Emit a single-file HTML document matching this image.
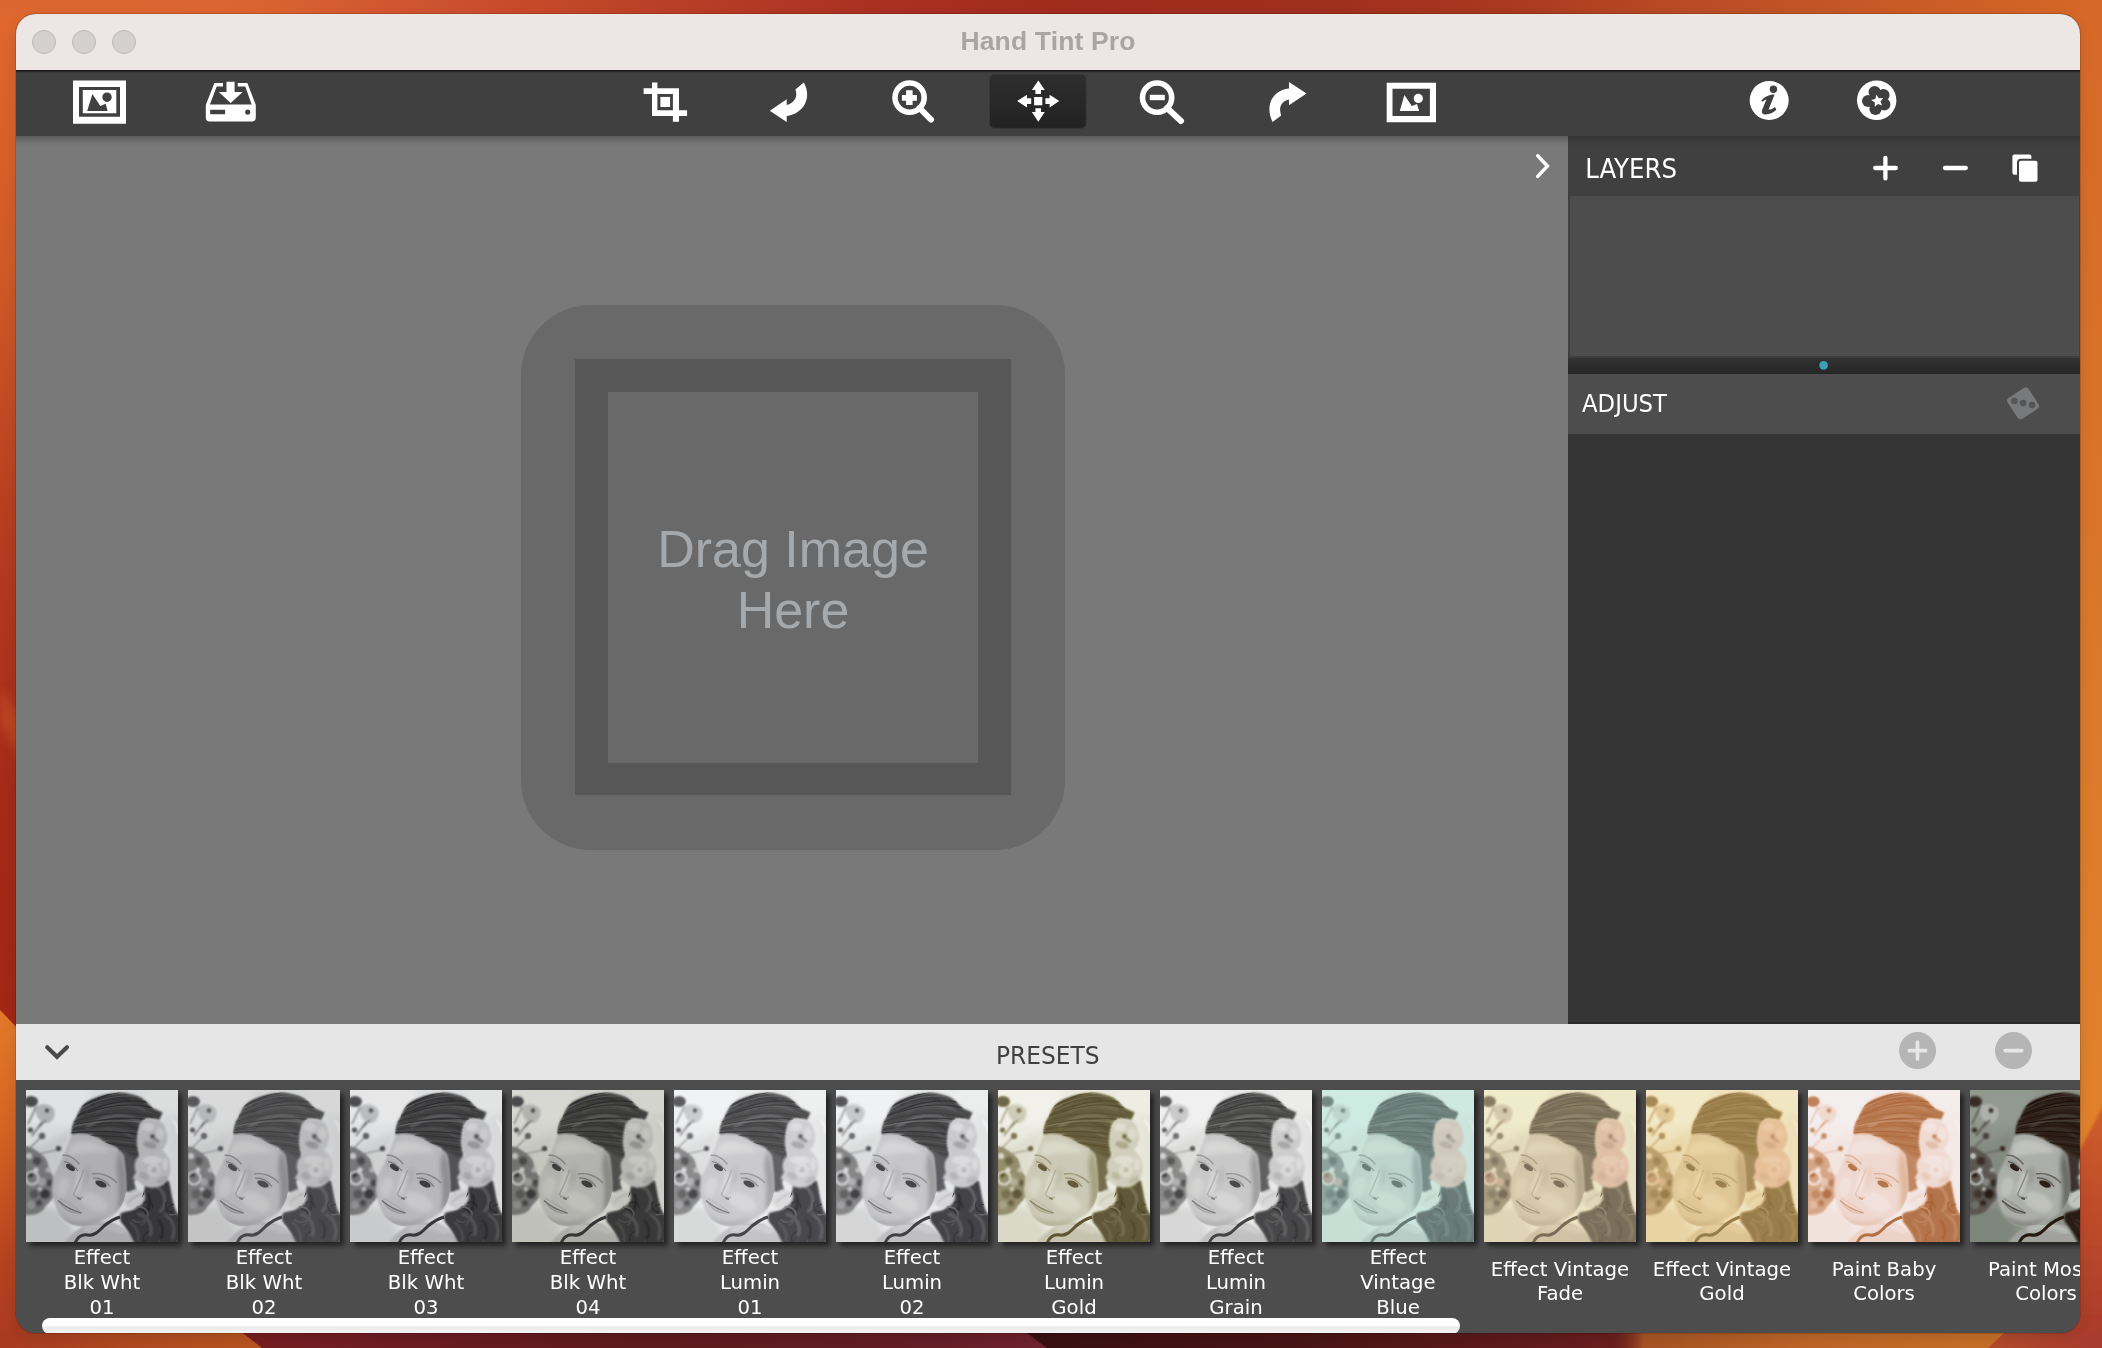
<!DOCTYPE html>
<html lang="en">
<head>
<meta charset="utf-8">
<title>Hand Tint Pro</title>
<style>
*{box-sizing:border-box;margin:0;padding:0}
html,body{width:2102px;height:1348px;overflow:hidden;background:#c4502a}
body{position:relative;font-family:"DejaVu Sans","Liberation Sans",sans-serif}
#wall{position:absolute;left:0;top:0;width:2102px;height:1348px}
#win{position:absolute;left:16px;top:14px;width:2064px;height:1319px;border-radius:20px;overflow:hidden;
 box-shadow:0 0 0 1px rgba(0,0,0,.14),0 6px 14px rgba(0,0,0,.10);background:#4d4d4d}
/* inner layer uses page coordinates */
#in{position:absolute;left:-16px;top:-14px;width:2102px;height:1348px;will-change:transform}
#in>*{position:absolute}
#titlebar{left:16px;top:14px;width:2064px;height:56px;background:#ece7e4}
.tl{position:absolute;top:16px;width:24px;height:24px;border-radius:50%;background:#d4d0ce;border:1px solid #bdb9b7}
#title{left:16px;top:14px;width:2064px;height:56px;line-height:55px;text-align:center;
 font:bold 26.5px/55px "Liberation Sans",sans-serif;color:#aaa5a3;letter-spacing:.15px}
#toolbar{left:16px;top:70px;width:2064px;height:66px;background:linear-gradient(#181818 0,#1c1c1c 1px,#383838 2.2px,#404040 3.5px)}
#canvas{left:16px;top:136px;width:1552px;height:888px;background:linear-gradient(#5c5c5c 0,#747474 7px,#797979 13px)}
#drop1{left:521px;top:304.5px;width:544px;height:545px;border-radius:70px;background:#696969}
#drop2{left:575px;top:359px;width:436px;height:436px;background:#575757}
#drop3{left:608px;top:392px;width:370px;height:371px;background:#696969}
#droptxt{left:608px;top:392px;width:370px;text-align:center;font:52px/61px "Liberation Sans",sans-serif;color:#a6a9ac;padding-top:127px}
#panel{left:1568px;top:136px;width:512px;height:888px;background:#353535}
#lhead{left:1568px;top:136px;width:512px;height:60px;background:linear-gradient(#343434 0,#3d3d3d 6px,#404040 12px)}
#lbg{left:1568px;top:196px;width:512px;height:162px;background:#3f3f3f}
#llist{left:1570px;top:196px;width:508.5px;height:160px;background:#4d4d4d}
#ldiv{left:1568px;top:358px;width:512px;height:16px;background:linear-gradient(#323232,#262626)}
#ahead{left:1568px;top:374px;width:512px;height:60px;background:#4d4d4d}
#phead{left:16px;top:1024px;width:2064px;height:55.5px;background:#e6e6e6}
#pbody{left:16px;top:1079.5px;width:2064px;height:253.5px;background:#4d4d4d}
#pline{left:1568px;top:1022.4px;width:512px;height:1.6px;background:#2a2a2a}
.th{position:absolute;top:10.5px;width:152px;height:152px;box-shadow:4px 4px 5px rgba(0,0,0,.55);background:#ccc}
.th svg{display:block}
.lbl{position:absolute;width:172px;text-align:center;color:#fff;font:19.7px/25px "DejaVu Sans",sans-serif;white-space:nowrap}
.l3{top:165.6px}
.l2{top:178px;line-height:24px}
#scroll{left:42px;top:1318px;width:1418px;height:16px;border-radius:8px;background:linear-gradient(#fff 0,#fff 46%,#ebebeb 56%,#f4f4f4 100%)}
#ovl{left:0;top:0;width:2102px;height:1348px;pointer-events:none}
</style>
</head>
<body>
<svg id="wall" viewBox="0 0 2102 1348" preserveAspectRatio="none">
 <defs>
  <linearGradient id="wtop" x1="0" x2="1" y1="0" y2="0">
   <stop offset="0" stop-color="#dd6630"/><stop offset=".12" stop-color="#dc6430"/><stop offset=".19" stop-color="#d05530"/>
   <stop offset=".25" stop-color="#c64a2a"/><stop offset=".333" stop-color="#b83c26"/><stop offset=".416" stop-color="#aa3022"/>
   <stop offset=".5" stop-color="#a02c1e"/><stop offset=".62" stop-color="#9e2e1e"/><stop offset=".714" stop-color="#a8381f"/>
   <stop offset=".785" stop-color="#b64824"/><stop offset=".856" stop-color="#c05426"/><stop offset=".928" stop-color="#cc5e26"/><stop offset="1" stop-color="#d66828"/>
  </linearGradient>
  <linearGradient id="wleft" x1="0" x2="0" y1="0" y2="1">
   <stop offset="0" stop-color="#e0672f"/><stop offset=".25" stop-color="#d05a27"/><stop offset=".5" stop-color="#b53d20"/>
   <stop offset=".75" stop-color="#a52a18"/><stop offset="1" stop-color="#a02616"/>
  </linearGradient>
  <linearGradient id="wleft2" x1="0" x2="0" y1="0" y2="1">
   <stop offset="0" stop-color="#e27a28"/><stop offset=".35" stop-color="#d46424"/><stop offset=".75" stop-color="#b44220"/><stop offset="1" stop-color="#a83a20"/>
  </linearGradient>
  <linearGradient id="wright" x1="0" x2="0" y1="0" y2="1">
   <stop offset="0" stop-color="#d66828"/><stop offset=".3" stop-color="#d8722a"/><stop offset=".75" stop-color="#e0802c"/><stop offset="1" stop-color="#e2842c"/>
  </linearGradient>
  <linearGradient id="wright2" x1="0" x2="0" y1="0" y2="1">
   <stop offset="0" stop-color="#d0602c"/><stop offset=".4" stop-color="#c04e2c"/><stop offset="1" stop-color="#a6382c"/>
  </linearGradient>
  <linearGradient id="wb1" x1="0" x2="1" y1="0" y2="0">
   <stop offset="0" stop-color="#a83a20"/><stop offset=".5" stop-color="#b04a20"/><stop offset="1" stop-color="#b85420"/>
  </linearGradient>
  <linearGradient id="wb2" x1="0" x2="1" y1="0" y2="0">
   <stop offset="0" stop-color="#781e22"/><stop offset=".5" stop-color="#5c1a1e"/><stop offset=".85" stop-color="#641e26"/><stop offset="1" stop-color="#70222e"/>
  </linearGradient>
  <linearGradient id="wb3" x1="0" x2="1" y1="0" y2="0">
   <stop offset="0" stop-color="#381012"/><stop offset=".4" stop-color="#481416"/><stop offset=".8" stop-color="#641c1c"/><stop offset="1" stop-color="#74241e"/>
  </linearGradient>
  <linearGradient id="wb4" x1="0" x2="1" y1="0" y2="0">
   <stop offset="0" stop-color="#74241e" stop-opacity="0"/><stop offset=".08" stop-color="#a85424"/><stop offset=".5" stop-color="#be6627"/><stop offset="1" stop-color="#c87028"/>
  </linearGradient>
  <linearGradient id="wb5" x1="0" x2="1" y1="0" y2="0">
   <stop offset="0" stop-color="#b44c2c"/><stop offset="1" stop-color="#a83a2e"/>
  </linearGradient>
  <filter id="wbl"><feGaussianBlur stdDeviation="5"/></filter>
  <filter id="wbl2" x="-20%" y="-20%" width="140%" height="140%"><feGaussianBlur stdDeviation="1.6"/></filter>
 </defs>
 <rect width="2102" height="1348" fill="#b8452a"/>
 <!-- left strip -->
 <rect x="0" y="0" width="40" height="1060" fill="url(#wleft)"/>
 <polygon points="0,688 40,742 40,790 0,724" fill="#c24c27" opacity=".7" filter="url(#wbl)"/>
 <polygon points="0,1010 40,1052 40,1348 0,1348" fill="url(#wleft2)"/>
 <!-- right strip -->
 <rect x="2070" y="0" width="32" height="1348" fill="url(#wright)"/>
 <polygon points="2050,1207 2112,1089 2112,1360 2050,1360" fill="url(#wright2)" filter="url(#wbl2)"/>
 <!-- top strip -->
 <rect x="0" y="0" width="2102" height="15" fill="url(#wtop)"/>
 <!-- bottom strip -->
 <rect x="0" y="1331" width="262" height="17" fill="url(#wb1)"/>
 <polygon points="240,1331 1047,1331 1047,1348 262,1348" fill="url(#wb2)"/>
 <polygon points="1024,1331 1700,1331 1700,1348 1047,1348" fill="url(#wb3)"/>
 <rect x="1612" y="1331" width="400" height="17" fill="url(#wb4)"/>
 <polygon points="2006,1331 2102,1331 2102,1348 1988,1348" fill="url(#wb5)"/>
</svg>

<div id="win"><div id="in">
 <div id="titlebar">
  <div class="tl" style="left:16px"></div><div class="tl" style="left:56px"></div><div class="tl" style="left:96px"></div>
 </div>
 <div id="title">Hand Tint Pro</div>
 <div id="toolbar"></div>
 <div id="canvas"></div>
 <div id="drop1"></div><div id="drop2"></div><div id="drop3"></div>
 <div id="droptxt">Drag Image<br>Here</div>
 <div id="panel"></div>
 <div id="lhead"></div><div id="lbg"></div><div id="llist"></div><div id="ldiv"></div><div id="ahead"></div>
 <div id="phead"></div>
 <div id="pline"></div>
 <div id="pbody">
<div class="th" style="left:10px"><svg width="152" height="152" viewBox="0 0 152 152"><g><use href="#portrait-bg"/><use href="#portrait-fg"/></g></svg></div><div class="lbl l3" style="left:0px">Effect<br>Blk Wht<br>01</div>
<div class="th" style="left:172px"><svg width="152" height="152" viewBox="0 0 152 152"><g filter="url(#f-bw2)"><use href="#portrait-bg"/><use href="#portrait-fg"/></g></svg></div><div class="lbl l3" style="left:162px">Effect<br>Blk Wht<br>02</div>
<div class="th" style="left:334px"><svg width="152" height="152" viewBox="0 0 152 152"><g filter="url(#f-bw3)"><use href="#portrait-bg"/><use href="#portrait-fg"/></g></svg></div><div class="lbl l3" style="left:324px">Effect<br>Blk Wht<br>03</div>
<div class="th" style="left:496px"><svg width="152" height="152" viewBox="0 0 152 152"><g filter="url(#f-bw4)"><use href="#portrait-bg"/><use href="#portrait-fg"/></g></svg></div><div class="lbl l3" style="left:486px">Effect<br>Blk Wht<br>04</div>
<div class="th" style="left:658px"><svg width="152" height="152" viewBox="0 0 152 152"><g filter="url(#f-lu1)"><use href="#portrait-bg"/><use href="#portrait-fg"/></g></svg></div><div class="lbl l3" style="left:648px">Effect<br>Lumin<br>01</div>
<div class="th" style="left:820px"><svg width="152" height="152" viewBox="0 0 152 152"><g filter="url(#f-lu2)"><use href="#portrait-bg"/><use href="#portrait-fg"/></g></svg></div><div class="lbl l3" style="left:810px">Effect<br>Lumin<br>02</div>
<div class="th" style="left:982px"><svg width="152" height="152" viewBox="0 0 152 152"><g filter="url(#f-lug)"><use href="#portrait-bg"/><use href="#portrait-fg"/></g></svg></div><div class="lbl l3" style="left:972px">Effect<br>Lumin<br>Gold</div>
<div class="th" style="left:1144px"><svg width="152" height="152" viewBox="0 0 152 152"><g filter="url(#f-lur)"><use href="#portrait-bg"/><use href="#portrait-fg"/></g></svg></div><div class="lbl l3" style="left:1134px">Effect<br>Lumin<br>Grain</div>
<div class="th" style="left:1306px"><svg width="152" height="152" viewBox="0 0 152 152"><g filter="url(#f-vbl)"><use href="#portrait-bg"/><use href="#portrait-fg"/></g><use href="#flower-tint" fill="#f0a896" opacity=".3"/></svg></div><div class="lbl l3" style="left:1296px">Effect<br>Vintage<br>Blue</div>
<div class="th" style="left:1468px"><svg width="152" height="152" viewBox="0 0 152 152"><g filter="url(#f-vfa)"><use href="#portrait-bg"/><use href="#portrait-fg"/></g><use href="#flower-tint" fill="#f0a896" opacity=".3"/></svg></div><div class="lbl l2" style="left:1458px">Effect Vintage<br>Fade</div>
<div class="th" style="left:1630px"><svg width="152" height="152" viewBox="0 0 152 152"><g filter="url(#f-vgo)"><use href="#portrait-bg"/><use href="#portrait-fg"/></g><use href="#flower-tint" fill="#f0a896" opacity=".3"/></svg></div><div class="lbl l2" style="left:1620px">Effect Vintage<br>Gold</div>
<div class="th" style="left:1792px"><svg width="152" height="152" viewBox="0 0 152 152"><g filter="url(#f-pba)"><use href="#portrait-bg"/><use href="#portrait-fg"/></g></svg></div><div class="lbl l2" style="left:1782px">Paint Baby<br>Colors</div>
<div class="th" style="left:1954px"><svg width="152" height="152" viewBox="0 0 152 152"><g filter="url(#f-pmobg)"><use href="#portrait-bg"/></g><g filter="url(#f-pmo)"><use href="#portrait-fg"/></g></svg></div><div class="lbl l2" style="left:1944px">Paint Mossy<br>Colors</div>
 </div>
 <div id="scroll"></div>

 <svg id="ovl" viewBox="0 0 2102 1348">
  <defs>
   <linearGradient id="mvbg" x1="0" x2="0" y1="0" y2="1"><stop offset="0" stop-color="#2e2e2e"/><stop offset="1" stop-color="#222"/></linearGradient>
<filter id="f-bw2" x="0" y="0" width="100%" height="100%" color-interpolation-filters="sRGB"><feComponentTransfer><feFuncR type="table" tableValues="0.112 0.145 0.177 0.209 0.242 0.274 0.306 0.339 0.371 0.403 0.436 0.468 0.500 0.533 0.568 0.615 0.661 0.707 0.753 0.778 0.804 0.829 0.854 0.880 0.905 0.930"/><feFuncG type="table" tableValues="0.112 0.145 0.177 0.209 0.242 0.274 0.306 0.339 0.371 0.403 0.436 0.468 0.500 0.533 0.568 0.615 0.661 0.707 0.753 0.778 0.804 0.829 0.854 0.880 0.905 0.930"/><feFuncB type="table" tableValues="0.112 0.145 0.177 0.209 0.242 0.274 0.306 0.339 0.371 0.403 0.436 0.468 0.500 0.533 0.568 0.615 0.661 0.707 0.753 0.778 0.804 0.829 0.854 0.880 0.905 0.930"/></feComponentTransfer></filter>
<filter id="f-bw3" x="0" y="0" width="100%" height="100%" color-interpolation-filters="sRGB"><feComponentTransfer><feFuncR type="table" tableValues="0.016 0.056 0.096 0.135 0.175 0.215 0.255 0.295 0.335 0.375 0.415 0.455 0.495 0.535 0.577 0.625 0.673 0.721 0.769 0.802 0.836 0.870 0.904 0.938 0.971 1.000"/><feFuncG type="table" tableValues="0.016 0.056 0.096 0.135 0.175 0.215 0.255 0.295 0.335 0.375 0.415 0.455 0.495 0.535 0.577 0.625 0.673 0.721 0.769 0.802 0.836 0.870 0.904 0.938 0.971 1.000"/><feFuncB type="table" tableValues="0.016 0.056 0.096 0.135 0.175 0.215 0.255 0.295 0.335 0.375 0.415 0.455 0.495 0.535 0.577 0.625 0.673 0.721 0.769 0.802 0.836 0.870 0.904 0.938 0.971 1.000"/></feComponentTransfer></filter>
<filter id="f-bw4" x="0" y="0" width="100%" height="100%" color-interpolation-filters="sRGB"><feComponentTransfer><feFuncR type="table" tableValues="0.018 0.056 0.094 0.132 0.170 0.208 0.246 0.284 0.323 0.361 0.399 0.437 0.475 0.513 0.553 0.599 0.645 0.691 0.737 0.764 0.790 0.817 0.843 0.870 0.897 0.923"/><feFuncG type="table" tableValues="0.018 0.056 0.094 0.132 0.170 0.208 0.246 0.284 0.323 0.361 0.399 0.437 0.475 0.513 0.553 0.599 0.645 0.691 0.737 0.764 0.790 0.817 0.843 0.870 0.897 0.923"/><feFuncB type="table" tableValues="0.016 0.053 0.090 0.127 0.164 0.201 0.238 0.275 0.312 0.349 0.386 0.424 0.461 0.498 0.537 0.581 0.625 0.669 0.714 0.740 0.767 0.793 0.820 0.846 0.873 0.900"/></feComponentTransfer></filter>
<filter id="f-lu1" x="0" y="0" width="100%" height="100%" color-interpolation-filters="sRGB"><feComponentTransfer><feFuncR type="table" tableValues="0.055 0.098 0.140 0.183 0.226 0.269 0.312 0.354 0.397 0.440 0.483 0.525 0.568 0.611 0.654 0.699 0.743 0.787 0.831 0.860 0.889 0.918 0.947 0.976 1.000 1.000"/><feFuncG type="table" tableValues="0.055 0.098 0.140 0.183 0.226 0.269 0.312 0.354 0.397 0.440 0.483 0.525 0.568 0.611 0.654 0.699 0.743 0.787 0.831 0.860 0.889 0.918 0.947 0.976 1.000 1.000"/><feFuncB type="table" tableValues="0.055 0.098 0.140 0.183 0.226 0.269 0.312 0.354 0.397 0.440 0.483 0.525 0.568 0.611 0.654 0.699 0.743 0.787 0.831 0.860 0.889 0.918 0.947 0.976 1.000 1.000"/></feComponentTransfer></filter>
<filter id="f-lu2" x="0" y="0" width="100%" height="100%" color-interpolation-filters="sRGB"><feComponentTransfer><feFuncR type="table" tableValues="0.026 0.070 0.114 0.157 0.201 0.245 0.289 0.332 0.376 0.420 0.463 0.507 0.551 0.595 0.639 0.683 0.727 0.771 0.816 0.847 0.878 0.910 0.941 0.973 1.000 1.000"/><feFuncG type="table" tableValues="0.026 0.070 0.114 0.157 0.201 0.245 0.289 0.332 0.376 0.420 0.463 0.507 0.551 0.595 0.639 0.683 0.727 0.771 0.816 0.847 0.878 0.910 0.941 0.973 1.000 1.000"/><feFuncB type="table" tableValues="0.026 0.070 0.114 0.157 0.201 0.245 0.289 0.332 0.376 0.420 0.463 0.507 0.551 0.595 0.639 0.683 0.727 0.771 0.816 0.847 0.878 0.910 0.941 0.973 1.000 1.000"/></feComponentTransfer></filter>
<filter id="f-lug" x="0" y="0" width="100%" height="100%" color-interpolation-filters="sRGB"><feComponentTransfer><feFuncR type="table" tableValues="0.188 0.222 0.257 0.291 0.325 0.359 0.394 0.428 0.462 0.496 0.530 0.565 0.599 0.633 0.669 0.712 0.754 0.797 0.839 0.866 0.892 0.919 0.945 0.972 0.998 1.000"/><feFuncG type="table" tableValues="0.149 0.185 0.220 0.256 0.292 0.327 0.363 0.399 0.434 0.470 0.506 0.541 0.577 0.612 0.651 0.696 0.741 0.786 0.831 0.859 0.887 0.915 0.942 0.970 0.998 1.000"/><feFuncB type="table" tableValues="0.013 0.049 0.085 0.121 0.158 0.194 0.230 0.266 0.302 0.338 0.374 0.410 0.447 0.483 0.524 0.581 0.639 0.696 0.753 0.792 0.830 0.869 0.907 0.946 0.985 1.000"/></feComponentTransfer></filter>
<filter id="f-lur" x="0" y="0" width="100%" height="100%" color-interpolation-filters="sRGB"><feComponentTransfer><feFuncR type="table" tableValues="0.047 0.090 0.133 0.175 0.218 0.261 0.304 0.347 0.389 0.432 0.475 0.518 0.560 0.603 0.646 0.691 0.735 0.779 0.824 0.852 0.881 0.910 0.939 0.968 0.997 1.000"/><feFuncG type="table" tableValues="0.047 0.090 0.133 0.175 0.218 0.261 0.304 0.347 0.389 0.432 0.475 0.518 0.560 0.603 0.646 0.691 0.735 0.779 0.824 0.852 0.881 0.910 0.939 0.968 0.997 1.000"/><feFuncB type="table" tableValues="0.039 0.082 0.125 0.168 0.210 0.253 0.296 0.339 0.381 0.424 0.467 0.510 0.553 0.595 0.639 0.683 0.727 0.771 0.816 0.845 0.874 0.903 0.932 0.960 0.989 1.000"/></feComponentTransfer></filter>
<filter id="f-vbl" x="0" y="0" width="100%" height="100%" color-interpolation-filters="sRGB"><feComponentTransfer><feFuncR type="table" tableValues="0.285 0.309 0.333 0.356 0.380 0.404 0.428 0.451 0.475 0.499 0.523 0.546 0.570 0.594 0.621 0.660 0.699 0.738 0.776 0.785 0.793 0.802 0.810 0.819 0.827 0.836"/><feFuncG type="table" tableValues="0.340 0.366 0.393 0.420 0.446 0.473 0.500 0.526 0.553 0.579 0.606 0.633 0.659 0.686 0.715 0.752 0.789 0.826 0.863 0.877 0.892 0.906 0.921 0.935 0.950 0.964"/><feFuncB type="table" tableValues="0.322 0.347 0.373 0.399 0.424 0.450 0.476 0.501 0.527 0.553 0.578 0.604 0.630 0.655 0.683 0.718 0.753 0.788 0.824 0.839 0.855 0.871 0.886 0.902 0.918 0.933"/></feComponentTransfer></filter>
<filter id="f-vfa" x="0" y="0" width="100%" height="100%" color-interpolation-filters="sRGB"><feComponentTransfer><feFuncR type="table" tableValues="0.335 0.362 0.390 0.417 0.445 0.472 0.500 0.528 0.555 0.583 0.610 0.638 0.665 0.693 0.722 0.758 0.793 0.828 0.863 0.882 0.901 0.921 0.940 0.959 0.979 0.998"/><feFuncG type="table" tableValues="0.288 0.315 0.343 0.370 0.398 0.425 0.453 0.481 0.508 0.536 0.563 0.591 0.618 0.646 0.675 0.709 0.743 0.778 0.812 0.840 0.867 0.895 0.923 0.951 0.978 1.000"/><feFuncB type="table" tableValues="0.222 0.246 0.270 0.294 0.317 0.341 0.365 0.389 0.412 0.436 0.460 0.484 0.507 0.531 0.557 0.591 0.624 0.657 0.690 0.717 0.743 0.770 0.796 0.823 0.849 0.876"/></feComponentTransfer></filter>
<filter id="f-vgo" x="0" y="0" width="100%" height="100%" color-interpolation-filters="sRGB"><feComponentTransfer><feFuncR type="table" tableValues="0.484 0.506 0.527 0.549 0.571 0.593 0.615 0.637 0.659 0.680 0.702 0.724 0.746 0.768 0.791 0.819 0.847 0.874 0.902 0.914 0.926 0.938 0.950 0.962 0.974 0.986"/><feFuncG type="table" tableValues="0.374 0.396 0.418 0.439 0.461 0.483 0.505 0.527 0.549 0.571 0.593 0.614 0.636 0.658 0.683 0.715 0.747 0.779 0.812 0.837 0.862 0.888 0.913 0.938 0.964 0.989"/><feFuncB type="table" tableValues="0.165 0.188 0.210 0.233 0.256 0.279 0.302 0.324 0.347 0.370 0.393 0.416 0.439 0.461 0.486 0.518 0.549 0.580 0.612 0.653 0.694 0.735 0.776 0.817 0.858 0.899"/></feComponentTransfer></filter>
<filter id="f-pba" x="0" y="0" width="100%" height="100%" color-interpolation-filters="sRGB"><feComponentTransfer><feFuncR type="table" tableValues="0.586 0.607 0.629 0.651 0.673 0.695 0.717 0.739 0.761 0.782 0.804 0.826 0.848 0.870 0.890 0.905 0.919 0.934 0.949 0.951 0.954 0.956 0.959 0.961 0.963 0.966"/><feFuncG type="table" tableValues="0.272 0.305 0.338 0.372 0.405 0.438 0.472 0.505 0.538 0.571 0.605 0.638 0.671 0.704 0.738 0.773 0.808 0.843 0.878 0.893 0.907 0.922 0.936 0.951 0.965 0.980"/><feFuncB type="table" tableValues="0.058 0.098 0.139 0.180 0.221 0.262 0.303 0.344 0.385 0.425 0.466 0.507 0.548 0.589 0.633 0.687 0.740 0.794 0.847 0.869 0.890 0.912 0.934 0.956 0.977 0.999"/></feComponentTransfer></filter>
<filter id="f-pmo" x="0" y="0" width="100%" height="100%" color-interpolation-filters="sRGB"><feComponentTransfer><feFuncR type="table" tableValues="0.000 0.019 0.052 0.084 0.116 0.149 0.181 0.213 0.246 0.278 0.310 0.342 0.375 0.407 0.449 0.521 0.593 0.665 0.737 0.764 0.790 0.817 0.843 0.870 0.897 0.923"/><feFuncG type="table" tableValues="0.000 0.000 0.000 0.012 0.051 0.090 0.129 0.168 0.207 0.246 0.285 0.324 0.363 0.402 0.450 0.524 0.597 0.671 0.745 0.772 0.798 0.825 0.851 0.878 0.904 0.931"/><feFuncB type="table" tableValues="0.000 0.000 0.000 0.000 0.020 0.059 0.098 0.137 0.176 0.215 0.254 0.293 0.332 0.371 0.418 0.492 0.566 0.640 0.714 0.740 0.767 0.793 0.820 0.846 0.873 0.900"/></feComponentTransfer></filter>
<filter id="f-pmobg" x="0" y="0" width="100%" height="100%" color-interpolation-filters="sRGB"><feComponentTransfer><feFuncR type="table" tableValues="0.000 0.023 0.046 0.068 0.091 0.114 0.137 0.160 0.183 0.205 0.228 0.251 0.274 0.297 0.324 0.364 0.405 0.446 0.486 0.508 0.530 0.551 0.573 0.595 0.617 0.638"/><feFuncG type="table" tableValues="0.000 0.014 0.039 0.064 0.088 0.113 0.138 0.163 0.187 0.212 0.237 0.261 0.286 0.311 0.340 0.382 0.425 0.467 0.510 0.532 0.553 0.575 0.597 0.618 0.640 0.662"/><feFuncB type="table" tableValues="0.000 0.007 0.030 0.053 0.076 0.098 0.121 0.144 0.167 0.190 0.212 0.235 0.258 0.281 0.308 0.349 0.389 0.430 0.471 0.492 0.514 0.536 0.557 0.579 0.601 0.623"/></feComponentTransfer></filter>
   <filter id="pb1" x="-5%" y="-5%" width="110%" height="110%"><feGaussianBlur stdDeviation="0.8"/></filter>
   <filter id="pb2" x="-10%" y="-10%" width="120%" height="120%"><feGaussianBlur stdDeviation="3"/></filter>
   <filter id="pb3" x="-5%" y="-5%" width="110%" height="110%"><feGaussianBlur stdDeviation="0.65"/></filter>
   <filter id="pb4" x="-5%" y="-5%" width="110%" height="110%"><feGaussianBlur stdDeviation="2"/></filter>
   <clipPath id="hclip"><path d="M45.5 45C45.5 36 48 30 50.6 27.5C53 20 56 16 59.3 13C66 7.5 80 3.5 90.4 2.9C98 2 108 4 115.7 8C121 11.5 124 15.5 126.5 18L136.7 22.4L133 30.4C128 29 123 28 119.3 29C114 33 112 40 113 48C112 56 114 62 113.5 70L104.8 65.6C100 62.6 97 60.6 94 59.8C88 56.5 84 54.5 79.5 52.5C76 50.5 72 47.5 68.7 46.8C64 44.5 60 43.9 57.8 43.9C53 43.4 49 43.8 45.5 45Z"/></clipPath>
   <clipPath id="cclip"><path d="M120 92C126 88 136 87 143 91C145 100 146 108 147.5 113C149 120 151 124 157 130L157 157L108 157C107 148 101 140 97 134.5C94 131 93 128 95 123C99 121 104 122 110 118C116 112 118 100 120 92Z"/></clipPath>
   <clipPath id="pclip"><rect x="0" y="0" width="152" height="152"/></clipPath>
   <clipPath id="fclip"><path d="M45.5 45C49 43.8 53 43.4 57.8 43.9C64 44.5 72 47.5 79.5 52.5C88 57 95 60 97.500 66C99 76 100 88 100 100C99.500 108 97 114 91 122C85 127.500 78 131 68 134.500C60 136.500 52 137 45 134C39 131 35 128 32.5 123.5C29 116 26.5 108 26 100C26 94 26.5 90 27 88C29 82 31 78 33 75C36 68 39 62 40 60C42 54 44 48 45.5 45Z"/></clipPath>
   <symbol id="portrait-bg" viewBox="0 0 152 152" width="152" height="152">
    <g clip-path="url(#pclip)">
    <rect x="-5" y="-5" width="162" height="162" fill="#d8d9da"/>
    <g filter="url(#pb2)">
     <rect x="-5" y="-5" width="70" height="40" fill="#e1e2e3"/>
     <rect x="118" y="-5" width="40" height="30" fill="#dcdddd"/>
     <path d="M-5 62L46 40L34 80L-5 110Z" fill="#c6c7c8"/>
     <path d="M-5 118L30 118L48 140L42 157L-5 157Z" fill="#bebfc0"/>
     <path d="M140 26L157 24L157 120L146 100Z" fill="#cfd0d1"/>
    </g>
    </g>
   </symbol>
   <symbol id="portrait-fg" viewBox="0 0 152 152" width="152" height="152">
    <g clip-path="url(#pclip)">
    <g filter="url(#pb1)">
     <!-- left flowers: upper sparse -->
     <ellipse cx="5" cy="11.5" rx="7" ry="5.5" fill="#4a4a4c"/>
     <path d="M11 16C16 13 24 14 28 19C30 24 28 30 23 33C18 34 13 31 11 26C9 22 9 19 11 16Z" fill="#b0b1b2"/>
     <circle cx="21" cy="20.5" r="2.2" fill="#3c3c3e"/>
     <path d="M10 17L2 34M20 30L10 40M16 32L6 46" stroke="#6a6a6c" stroke-width="1.5" fill="none"/>
     <circle cx="4.5" cy="40" r="2.6" fill="#4c4c4e"/>
     <circle cx="16" cy="46" r="3.2" fill="#5c5c5e"/>
     <circle cx="32.5" cy="58.5" r="2.6" fill="#3e3e40"/>
     <path d="M14 48L2 60M31 60L12 64L2 70" stroke="#727274" stroke-width="1.2" fill="none"/>
     <!-- left flowers: dense lower -->
     <path d="M-2 56C6 56 12 62 16 65C23 69 21 77 25 83C31 90 30 98 28 104C26 112 21 113 18 119C13 125 6 125 -2 125Z" fill="#747476"/>
     <circle cx="24" cy="93" r="3.4" fill="#454547"/>
     <circle cx="22" cy="80" r="2.6" fill="#a8a8aa"/>
     <circle cx="11" cy="71" r="4.2" fill="#4a4a4c"/>
     <circle cx="4" cy="84" r="3.6" fill="#2e2e30"/>
     <circle cx="6" cy="88" r="6.5" fill="none" stroke="#c4c4c6" stroke-width="2.2"/>
     <circle cx="16" cy="92" r="4" fill="#9a9a9c"/>
     <circle cx="19" cy="104" r="5" fill="#38383a"/>
     <circle cx="8" cy="104" r="4.500" fill="#545456"/>
     <circle cx="5" cy="115" r="4" fill="#8c8c8e"/>
     <circle cx="13" cy="113" r="3.2" fill="#464648"/>
     <circle cx="3" cy="66" r="3" fill="#bcbcbe"/>
     <circle cx="10" cy="80" r="2.4" fill="#c4c4c6"/>
     <circle cx="14" cy="99" r="2" fill="#b8b8ba"/>
     <!-- hair between face and flower -->
     <path d="M92 58L114 68L113 82L108 92L111 102L99 102L96 90L91 76Z" fill="#505052"/>
     <!-- hair top -->
     <path d="M45.5 45C45.5 36 48 30 50.6 27.5C53 20 56 16 59.3 13C66 7.5 80 3.5 90.4 2.9C98 2 108 4 115.7 8C121 11.5 124 15.5 126.5 18L136.7 22.4L133 30.4C128 29 123 28 119.3 29C114 33 112 40 113 48C112 56 114 62 113.5 70L104.8 65.6C100 62.6 97 60.6 94 59.8C88 56.5 84 54.5 79.5 52.5C76 50.5 72 47.5 68.7 46.8C64 44.5 60 43.9 57.8 43.9C53 43.4 49 43.8 45.5 45Z" fill="#3c3c3e"/>
     <path d="M120 21C108 14 86 12 70 22" stroke="#58585a" stroke-width="2.4" fill="none"/>
     <path d="M116 33C100 22 78 24 60 38" stroke="#5e5e60" stroke-width="2.8" fill="none"/>
     <path d="M110 50C98 38 80 36 64 43" stroke="#525254" stroke-width="2.2" fill="none"/>
     <path d="M104 10C92 6 76 8 64 15" stroke="#2c2c2e" stroke-width="2.2" fill="none"/>
     <path d="M112 42C102 30 84 29 70 34" stroke="#2a2a2c" stroke-width="2" fill="none"/>
     <path d="M52 30C58 22 66 17 74 14" stroke="#4c4c4e" stroke-width="1.6" fill="none"/>
     <!-- curls lower right -->
     <path d="M120 92C126 88 136 87 143 91C145 100 146 108 147.5 113C149 120 151 124 157 130L157 157L108 157C107 148 101 140 97 134.5C94 131 93 128 95 123C99 121 104 122 110 118C116 112 118 100 120 92Z" fill="#38383a"/>
     <path d="M130 96C140 102 142 114 134 122" stroke="#5c5c5e" stroke-width="2.4" fill="none"/>
     <path d="M112 124C122 126 128 136 124 146" stroke="#58585a" stroke-width="2.4" fill="none"/>
     <path d="M138 124C148 130 150 140 146 150" stroke="#58585a" stroke-width="2.2" fill="none"/>
     <path d="M122 104C126 112 124 118 118 124" stroke="#242426" stroke-width="2.4" fill="none"/>
     <path d="M132 130C138 136 138 144 134 150" stroke="#262628" stroke-width="2.4" fill="none"/>
     <path d="M104 132C110 136 114 144 112 152" stroke="#505052" stroke-width="1.8" fill="none"/>
     <!-- shoulder -->
     <path d="M36 157C44 141 60 133 76 132C92 131 102 139 110 157Z" fill="#a9a9ab"/>
     <!-- face base -->
     <path d="M45.5 45C49 43.8 53 43.4 57.8 43.9C64 44.5 72 47.5 79.5 52.5C88 57 95 60 97.500 66C99 76 100 88 100 100C99.500 108 97 114 91 122C85 127.500 78 131 68 134.500C60 136.500 52 137 45 134C39 131 35 128 32.5 123.5C29 116 26.5 108 26 100C26 94 26.5 90 27 88C29 82 31 78 33 75C36 68 39 62 40 60C42 54 44 48 45.5 45Z" fill="#afafb1"/>
     <!-- ear -->
     <ellipse cx="108.5" cy="109" rx="11" ry="8.5" transform="rotate(-35 108.5 109)" fill="#c3c3c5"/>
     <path d="M102 113C106 107 112 105 116 104" stroke="#a0a0a2" stroke-width="1.4" fill="none"/>
    </g>
    <g clip-path="url(#hclip)"><g filter="url(#pb3)" opacity=".8"><path d="M125.2 5.6Q89.8 -7.7 44.1 23.6" stroke="#28282a" stroke-width="1.5" fill="none"/><path d="M124.7 9.6Q87.0 -2.4 44.2 24.7" stroke="#646466" stroke-width="0.9" fill="none"/><path d="M129.0 13.8Q93.4 3.5 43.6 29.4" stroke="#28282a" stroke-width="1.2" fill="none"/><path d="M127.4 17.9Q88.5 8.1 44.2 30.5" stroke="#28282a" stroke-width="1.3" fill="none"/><path d="M127.0 23.1Q88.6 10.7 42.2 31.1" stroke="#48484a" stroke-width="1.2" fill="none"/><path d="M127.7 27.6Q93.1 16.4 43.0 33.0" stroke="#303032" stroke-width="1.0" fill="none"/><path d="M128.2 31.3Q92.5 22.5 43.2 37.4" stroke="#28282a" stroke-width="1.2" fill="none"/><path d="M126.7 34.7Q93.2 25.9 45.8 36.7" stroke="#646466" stroke-width="1.3" fill="none"/><path d="M126.5 40.4Q90.3 31.2 44.3 39.9" stroke="#303032" stroke-width="0.9" fill="none"/><path d="M129.6 43.3Q82.8 36.3 43.2 42.2" stroke="#48484a" stroke-width="1.5" fill="none"/><path d="M127.1 47.6Q90.0 38.1 43.8 43.0" stroke="#28282a" stroke-width="1.2" fill="none"/><path d="M126.3 51.6Q90.9 44.2 45.7 46.0" stroke="#2e2e30" stroke-width="1.2" fill="none"/><path d="M131.1 56.5Q91.8 50.7 43.1 47.7" stroke="#505052" stroke-width="1.3" fill="none"/><path d="M125.8 60.4Q83.0 52.4 44.6 48.5" stroke="#303032" stroke-width="1.3" fill="none"/><path d="M124.0 64.3Q87.0 57.9 44.3 53.4" stroke="#48484a" stroke-width="1.5" fill="none"/><path d="M129.2 69.9Q90.9 62.8 45.5 55.4" stroke="#48484a" stroke-width="1.4" fill="none"/></g></g>
    <g clip-path="url(#cclip)"><g filter="url(#pb3)" opacity=".8"><path d="M117.5 113.4A5.6 5.6 0 0 1 126.9 118.1" stroke="#222224" stroke-width="1.2" fill="none"/><path d="M142.8 116.5A5.7 5.7 0 0 1 153.0 119.2" stroke="#222224" stroke-width="1.0" fill="none"/><path d="M117.7 102.6A7.2 7.2 0 0 1 104.7 105.4" stroke="#262628" stroke-width="1.6" fill="none"/><path d="M105.9 115.0A7.1 7.1 0 0 1 110.4 102.5" stroke="#222224" stroke-width="1.1" fill="none"/><path d="M122.5 156.1A7.9 7.9 0 0 1 122.7 141.4" stroke="#262628" stroke-width="1.1" fill="none"/><path d="M124.3 118.8A10.0 10.0 0 0 1 109.5 107.6" stroke="#222224" stroke-width="1.2" fill="none"/><path d="M153.7 110.8A9.1 9.1 0 0 1 143.3 124.3" stroke="#666668" stroke-width="1.3" fill="none"/><path d="M122.3 99.8A10.1 10.1 0 0 1 140.4 95.0" stroke="#262628" stroke-width="1.4" fill="none"/><path d="M108.5 119.2A8.0 8.0 0 0 1 121.8 126.2" stroke="#666668" stroke-width="1.8" fill="none"/><path d="M151.4 133.1A9.8 9.8 0 0 1 150.4 151.4" stroke="#4a4a4c" stroke-width="1.8" fill="none"/><path d="M122.2 122.0A9.4 9.4 0 0 1 106.3 129.4" stroke="#525254" stroke-width="1.5" fill="none"/><path d="M115.0 122.1A7.1 7.1 0 0 1 115.1 135.2" stroke="#4a4a4c" stroke-width="2.0" fill="none"/><path d="M146.9 121.9A6.3 6.3 0 0 1 141.1 111.7" stroke="#262628" stroke-width="1.3" fill="none"/><path d="M133.9 149.3A8.7 8.7 0 0 1 118.8 155.0" stroke="#4a4a4c" stroke-width="1.3" fill="none"/></g></g>
    <!-- soft face shading -->
    <g clip-path="url(#fclip)"><g filter="url(#pb4)">
     <path d="M94 60C99 74 102 88 101 101C100 110 97 116 91 124C93 110 93 96 91 84C90 76 90 68 94 60Z" fill="#8a8a8c"/>
     <path d="M45 54C54 48 70 51 86 62C78 62 60 62 42 66Z" fill="#bfbfc1"/>
     <ellipse cx="68" cy="112" rx="15" ry="8" transform="rotate(25 68 112)" fill="#bdbdbf"/>
     <ellipse cx="37" cy="97" rx="6" ry="10" transform="rotate(15 37 97)" fill="#bbbbbd"/>
     <path d="M32 124C44 133 60 135 78 127C66 139 42 141 32 124Z" fill="#949496"/>
     <ellipse cx="60" cy="86" rx="5" ry="9" transform="rotate(20 60 86)" fill="#a4a4a6"/>
     <ellipse cx="42" cy="74" rx="6" ry="4" transform="rotate(30 42 74)" fill="#a2a2a4"/>
     <ellipse cx="76" cy="92" rx="8" ry="4.5" transform="rotate(24 76 92)" fill="#a0a0a2"/>
     <path d="M55 85C53 92 50.5 98 49.5 102" stroke="#c9c9cb" stroke-width="4.5" fill="none" stroke-linecap="round"/>
    </g></g>
    <g filter="url(#pb4)">
     <path d="M58 141C70 134 86 134 98 143" stroke="#b9b9bb" stroke-width="5" fill="none"/>
    </g>
    <g filter="url(#pb3)">
     <!-- nose -->
     <path d="M57.5 80C54.5 90 50.5 98 47.5 104C49 108 54 109 57 107" stroke="#9c9c9e" stroke-width="1.6" fill="none"/>
     <ellipse cx="53" cy="108.5" rx="2.3" ry="1.1" transform="rotate(25 53 108.5)" fill="#727274"/>
     <!-- eyes -->
     <ellipse cx="44.5" cy="77.5" rx="5" ry="2.6" transform="rotate(32 44.5 77.5)" fill="#3a3a3c"/>
     <ellipse cx="75" cy="94" rx="6" ry="2.9" transform="rotate(24 75 94)" fill="#3a3a3c"/>
     <path d="M38 71.5C42 72 47 75 52 81" stroke="#6e6e70" stroke-width="1.1" fill="none"/>
     <path d="M67 88C73 87.5 79 90 84 96.5" stroke="#6e6e70" stroke-width="1.1" fill="none"/>
     <path d="M36.5 65.300C42 64.500 48.500 68 53.500 74.400" stroke="#858587" stroke-width="1.5" fill="none"/>
     <path d="M66 84C74 82 84 85.500 91 93" stroke="#858587" stroke-width="1.5" fill="none"/>
     <!-- mouth -->
     <path d="M33 112C37 120 46 125 55 123.500C47 123 39 118 33 112Z" fill="#969698"/>
     <path d="M32 110.500C38 116 46 120.500 55.500 123" stroke="#6a6a6c" stroke-width="1.4" fill="none"/>
     <path d="M33.500 108.500C38 110.500 46 115.500 54 121" stroke="#a4a4a6" stroke-width="1.8" fill="none"/>
     <!-- hair strand over shoulder -->
     <path d="M49 154C51 147 56 144 62 145C68 146 72 142 78 136C84 131 89 128.500 94 127" stroke="#343436" stroke-width="3" fill="none"/>
    </g>
    <g filter="url(#pb1)">
     <!-- hair flower -->
     <path d="M113 38C113 31 120 27.5 127 29.5C134 28.5 140 34 140 41C143 47 141 56 136 60C141 63 145 70 144.5 78C145 88 140 95 132 97C124 99.5 116 96 112 91L106.5 88.5L110 82C107 76 109 69 114 65C110 58 110 46 113 38Z" fill="#b3b3b5"/>
     <ellipse cx="122" cy="37" rx="6" ry="4" fill="#c6c6c8"/>
     <ellipse cx="134" cy="44" rx="4" ry="6" fill="#c2c2c4"/>
     <ellipse cx="124" cy="55" rx="7" ry="3.5" transform="rotate(15 124 55)" fill="#929294"/>
     <circle cx="126.500" cy="46.500" r="2.4" fill="#3c3c3e"/>
     <ellipse cx="130" cy="50" rx="4" ry="2" transform="rotate(30 130 50)" fill="#808082"/>
     <ellipse cx="126" cy="70" rx="10" ry="4" fill="#c8c8ca"/>
     <circle cx="128" cy="80" r="6.500" fill="#c4c4c6"/>
     <circle cx="128" cy="80" r="3" fill="#a6a6a8"/>
     <ellipse cx="118" cy="86" rx="5" ry="3.500" transform="rotate(30 118 86)" fill="#a0a0a2"/>
     <ellipse cx="136" cy="90" rx="6" ry="3" transform="rotate(-30 136 90)" fill="#a2a2a4"/>
     <ellipse cx="139" cy="74" rx="3" ry="6" fill="#c6c6c8"/>
     <path d="M146 30C150 33 152 38 152 44" stroke="#ececee" stroke-width="1.8" fill="none"/>
    </g>
    </g>
   </symbol>
   <symbol id="flower-tint" viewBox="0 0 152 152" width="152" height="152">
    <g filter="url(#pb1)">
     <path d="M113 38C113 31 120 27.5 127 29.5C134 28.5 140 34 140 41C143 47 141 56 136 60C141 63 145 70 144.5 78C145 88 140 95 132 97C124 99.5 116 96 112 91L106.5 88.5L110 82C107 76 109 69 114 65C110 58 110 46 113 38Z"/>
     <circle cx="6" cy="88" r="6"/><circle cx="16" cy="92" r="3.5"/>
    </g>
   </symbol>

  </defs>

  <!-- ===== toolbar icons ===== -->
  <g fill="#fff">
   <!-- open image -->
   <path fill-rule="evenodd" d="M73 80.5H126V123.7H73Z M79 87V116.8H120V87Z"/>
   <path fill-rule="evenodd" d="M82.8 90.1H116.3V113.2H82.8Z M87.2 111L92.4 93.9L100.3 106.1L105.7 103.7L107.6 111Z M111.7 97.2A4.7 4.7 0 1 0 102.3 97.2A4.7 4.7 0 1 0 111.7 97.2Z"/>
   <!-- save / disk -->
   <path fill-rule="evenodd" d="M214.4 83.1H223V86.5H216.7L209.9 104.6H251.6L245.3 86.5H237.7V83.1H247.4L255.8 105V117.5Q255.8 121.5 251.8 121.5H209.8Q205.8 121.5 205.8 117.5V105Z M210.2 109.8V114.2H225.1V109.8Z M250.3 112.1A2.6 2.6 0 1 0 245.1 112.1A2.6 2.6 0 1 0 250.3 112.1Z"/>
   <path d="M226.5 81.8H234.6V92H242.7L230.7 103L218.8 92H226.5Z"/>
   <!-- crop -->
   <path d="M652 82.4H657.4V88.3H679V110.3H687.1V116.1H679V121.8H672.9V116.1H652V94.1H643.6V88.3H652Z M657.4 94.1V110.3H672.9V94.1Z" fill-rule="evenodd"/>
   <rect x="660.4" y="96.9" width="9.7" height="10.1"/>
   <!-- undo -->
   <path d="M769.8 110.8L786.7 99.3V105C793.5 103.5 798.5 97 795.4 89.4L803.8 82.4C812.5 98 803.5 113.5 786.7 116V122Z"/>
   <!-- zoom in -->
   <path d="M909.6 80.2a17.4 17.4 0 1 0 0 34.8a17.4 17.4 0 1 0 0-34.8Zm0 5.6a11.8 11.8 0 1 1 0 23.6a11.8 11.8 0 1 1 0-23.6Z"/>
   <path d="M919.5 108L931 119.6" stroke="#fff" stroke-width="6" stroke-linecap="round"/>
   <path d="M901.9 95.1H906.1V90.2H912.6V95.1H916.9V100.7H912.6V105.1H906.1V100.7H901.9Z"/>
   <!-- move (selected) -->
   <rect x="989.5" y="74.3" width="96.7" height="54" rx="5" fill="url(#mvbg)" stroke="#383838" stroke-width="1"/>
   <rect x="1034.1" y="97" width="8.2" height="8.3"/>
   <path d="M1038.3 80.5L1044.8 89.9H1041V94.1H1035.4V89.9H1031.8Z"/>
   <path d="M1038.3 121.8L1044.8 111.9H1041V108.2H1035.4V111.9H1031.8Z"/>
   <path d="M1017.1 101.1L1027 94.8V98.3H1031.2V104H1027V107.4Z"/>
   <path d="M1059.3 101.1L1049.6 94.8V98.3H1045.4V104H1049.6V107.4Z"/>
   <!-- zoom out -->
   <path d="M1157.1 80.2a17.4 17.4 0 1 0 0 34.8a17.4 17.4 0 1 0 0-34.8Zm0 5.6a11.8 11.8 0 1 1 0 23.6a11.8 11.8 0 1 1 0-23.6Z"/>
   <path d="M1167 108L1181 121" stroke="#fff" stroke-width="6" stroke-linecap="round"/>
   <rect x="1149.8" y="94.8" width="15" height="5.4"/>
   <!-- redo -->
   <path d="M1306.5 93.6L1289 82V88.6C1274 90 1264 104 1272.5 122L1281.2 115.5C1278 107 1282 101 1289 99.6V105.3Z"/>
   <!-- image (2) -->
   <path fill-rule="evenodd" d="M1386.7 82.8H1436V122.3H1386.7Z M1392.5 88.8V116H1429.9V88.8Z"/>
   <path d="M1399.8 111.1L1404.4 94.9L1411.8 106.1L1417 103.9L1419.1 111.1Z"/>
   <circle cx="1418.3" cy="98.4" r="4.6"/>
   <!-- info -->
   <circle cx="1769.2" cy="100.4" r="19.5"/>
   <!-- flower -->
   <circle cx="1876.7" cy="100.2" r="19.7"/>
  </g>
  <g fill="#404040">
   <circle cx="1773.4" cy="89.2" r="3.7"/>
   <path d="M1761.4 100.6C1764.5 96.8 1769.5 94.4 1774.6 94.6L1768.6 109.6C1770.8 109.6 1773 108.6 1775 107L1776.4 109.8C1773 113.2 1768.6 114.8 1764.6 114.4C1761.8 114 1761.4 111.6 1762.4 109.2L1766.4 99.4C1765 99.6 1763.8 100.6 1762.8 101.8Z"/>
   <circle cx="1874.6" cy="92.1" r="6.1"/>
   <circle cx="1883.5" cy="95.1" r="6.1"/>
   <circle cx="1884.3" cy="104.4" r="6.1"/>
   <circle cx="1875.5" cy="108.9" r="6.1"/>
   <circle cx="1868.1" cy="101.0" r="6.1"/>
   <circle cx="1876.7" cy="100.4" r="8.5"/>
  </g>
  <path d="M1876.4 94.7L1878.8 98.3L1883.2 98.0L1880.5 101.4L1882.1 105.4L1878.0 104.0L1874.7 106.8L1874.9 102.4L1871.2 100.1L1875.3 98.9Z" fill="#fff"/>

  <!-- ===== right panel ===== -->
  <path d="M1537.7 155.8L1547.4 166.1L1537.7 176.4" fill="none" stroke="#fff" stroke-width="3.5" stroke-linecap="round" stroke-linejoin="miter"/>
  <text x="1585.3" y="178.4" font-family="DejaVu Sans Condensed, DejaVu Sans, sans-serif" font-size="26.3" fill="#fff" textLength="91.6" lengthAdjust="spacingAndGlyphs">LAYERS</text>
  <g stroke="#fff" stroke-width="4.3" stroke-linecap="round" fill="none">
   <path d="M1875.2 168H1895.8M1885.4 157.8V178.4"/>
   <path d="M1945 168H1965.8"/>
  </g>
  <rect x="2012.4" y="154.6" width="19" height="20.2" rx="2" fill="#fff"/>
  <rect x="2018" y="159.7" width="20.5" height="23" rx="3" fill="#fff" stroke="#404040" stroke-width="2"/>
  <circle cx="1823.6" cy="365.4" r="4.3" fill="#3b9fb6"/>
  <text x="1582.0" y="412.3" font-family="DejaVu Sans Condensed, DejaVu Sans, sans-serif" font-size="24.9" fill="#fff" textLength="85" lengthAdjust="spacingAndGlyphs">ADJUST</text>
  <g transform="rotate(-33 2023.1 403.3)">
   <rect x="2010.6" y="390.8" width="25" height="25" rx="3.6" fill="#78797a"/>
  </g>
  <circle cx="2014.4" cy="401" r="3.3" fill="#555"/><circle cx="2023.1" cy="403.1" r="3.3" fill="#555"/><circle cx="2032.1" cy="405.1" r="3.3" fill="#555"/>

  <!-- ===== presets header ===== -->
  <path d="M47.2 1047.2L57 1056.8L67 1047.2" fill="none" stroke="#4a4a4a" stroke-width="4.1" stroke-linecap="round" stroke-linejoin="miter"/>
  <text x="995.9" y="1064.4" font-family="DejaVu Sans Condensed, DejaVu Sans, sans-serif" font-size="25.6" fill="#404040" textLength="103.7" lengthAdjust="spacingAndGlyphs">PRESETS</text>
  <circle cx="1917.6" cy="1050.6" r="18.5" fill="#b5b5b5"/>
  <circle cx="2013.5" cy="1050.6" r="18.5" fill="#b5b5b5"/>
  <g stroke="#e6e6e6" stroke-width="3.7" stroke-linecap="round">
   <path d="M1909.3 1050.6H1925.7M1917.5 1042.2V1059"/>
   <path d="M2005.2 1050.6H2021.7"/>
  </g>
 </svg>
</div></div>
</body>
</html>
